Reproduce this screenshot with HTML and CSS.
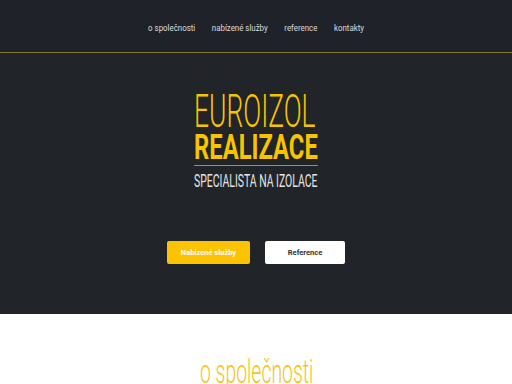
FILE: index.html
```html
<!DOCTYPE html>
<html lang="cs">
<head>
<meta charset="utf-8">
<title>Euroizol Realizace</title>
<link rel="stylesheet" href="styles.css">
</head>
<body>
<header class="nav">
  <ul class="menu">
    <li><a href="#">o společnosti</a></li>
    <li><a href="#">nabízené služby</a></li>
    <li><a href="#">reference</a></li>
    <li><a href="#">kontakty</a></li>
  </ul>
</header>
<section class="hero">
  <div class="brand">
    <div class="line1"><span>EUROIZOL</span></div>
    <div class="line2"><span>REALIZACE</span></div>
    <div class="rule"></div>
    <div class="line3"><span>SPECIALISTA NA IZOLACE</span></div>
  </div>
  <div class="buttons">
    <a class="btn btn-yellow" href="#">Nabízené služby</a>
    <a class="btn btn-white" href="#">Reference</a>
  </div>
</section>
<section class="about">
  <h2 class="about-title"><span>o společnosti</span></h2>
</section>
</body>
</html>
```
FILE: styles.css
```css
* { box-sizing: border-box; }
html, body { margin: 0; padding: 0; }
body {
  font-family: Roboto, "Liberation Sans", sans-serif;
  background: #fff;
  width: 512px;
  overflow: hidden;
}
.nav {
  height: 53px;
  background: #1f2228;
  border-bottom: 1px solid #837a2e;
  display: flex;
  align-items: center;
  justify-content: center;
}
.menu {
  list-style: none;
  margin: 0;
  padding: 0 0 2px 0;
  display: flex;
  gap: 20px;
  transform: scaleX(0.83);
}
.menu a {
  color: #dcdcdc;
  text-decoration: none;
  font-size: 9.5px;
}
.hero {
  height: 261px;
  background: #212428;
  display: flex;
  flex-direction: column;
  align-items: center;
  padding-top: 37px;
}
.brand {
  width: 124px;
  white-space: nowrap;
}
.brand span {
  display: inline-block;
  transform-origin: left center;
}
.line1 {
  height: 42px;
  color: #f8c300;
  font-weight: 300;
  font-size: 46px;
  line-height: 42px;
}
.line1 span { transform: scaleX(0.575); }
.line2 {
  height: 31px;
  color: #f8c300;
  font-weight: 700;
  font-size: 35px;
  line-height: 31px;
}
.line2 span { transform: scaleX(0.68); }
.rule {
  height: 1px;
  background: #8a8d92;
  margin-top: 2px;
}
.line3 {
  margin-top: 6px;
  color: #e4e4e4;
  font-size: 18px;
  line-height: 18px;
}
.line3 span { transform: scaleX(0.58); }
.buttons {
  margin-top: 51px;
  display: flex;
  gap: 15px;
}
.btn {
  display: flex;
  align-items: center;
  justify-content: center;
  height: 23px;
  font-size: 7.5px;
  font-weight: 700;
  text-decoration: none;
  border-radius: 2px;
}
.btn-yellow {
  width: 83px;
  background: #fcc302;
  color: #fff;
}
.btn-white {
  width: 80px;
  background: #fff;
  color: #333;
}
.about {
  display: flex;
  justify-content: center;
  padding-top: 37px;
}
.about-title {
  margin: 0;
  width: 112px;
  white-space: nowrap;
  color: #f3c31c;
  font-weight: 300;
  font-size: 34px;
  line-height: 40px;
}
.about-title span {
  display: inline-block;
  transform-origin: left center;
  transform: scaleX(0.57);
}
```
